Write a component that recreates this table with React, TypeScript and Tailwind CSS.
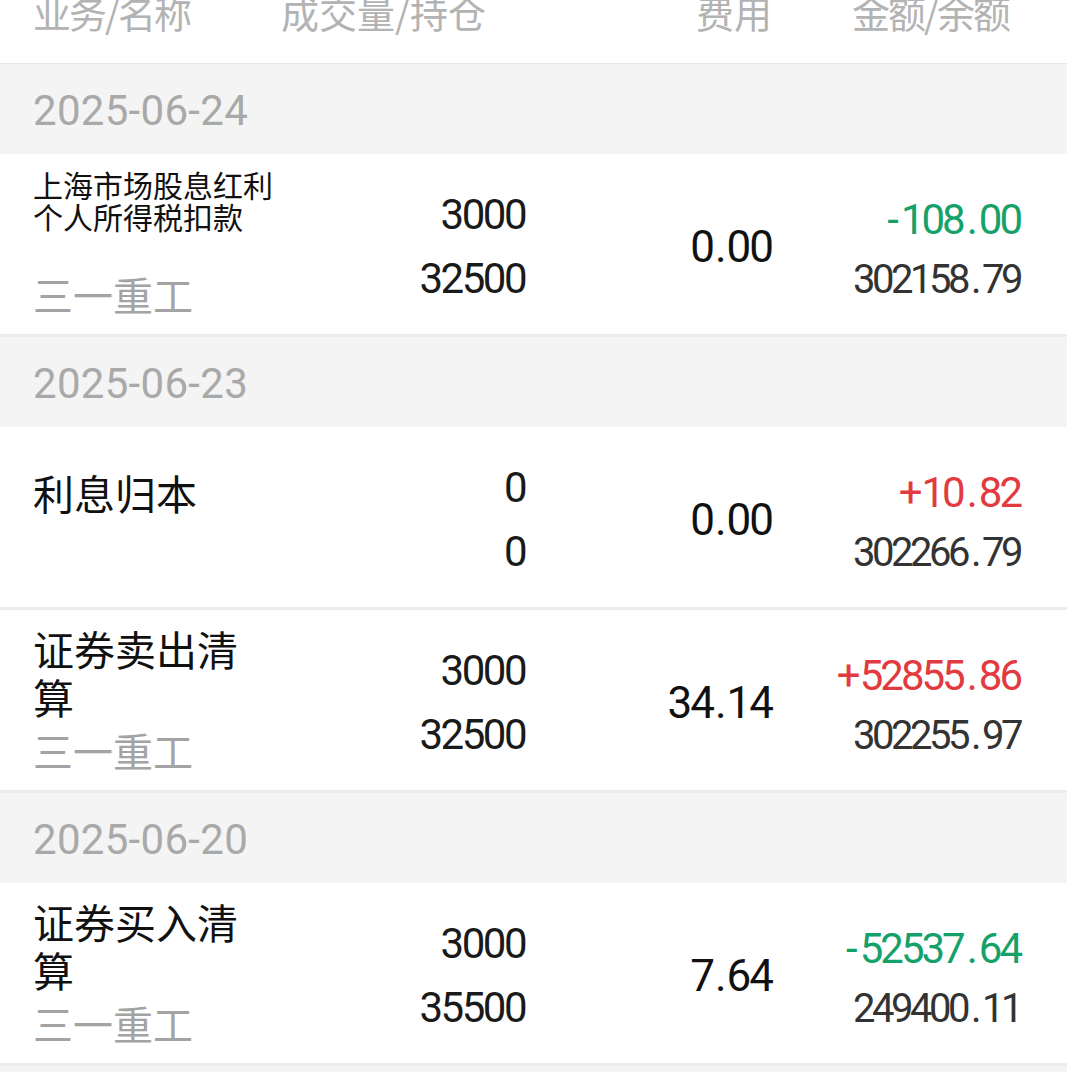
import React from "react";

type Rec = {
  name: string;
  small?: boolean;
  sub?: string;
  qty: string;
  hold: string;
  fee: string;
  amt: string;
  up: boolean;
  bal: string;
};

const groups: { date: string; items: Rec[] }[] = [
  {
    date: "2025-06-24",
    items: [
      {
        name: "上海市场股息红利个人所得税扣款",
        small: true,
        sub: "三一重工",
        qty: "3000",
        hold: "32500",
        fee: "0.00",
        amt: "-108.00",
        up: false,
        bal: "302158.79",
      },
    ],
  },
  {
    date: "2025-06-23",
    items: [
      { name: "利息归本", qty: "0", hold: "0", fee: "0.00", amt: "+10.82", up: true, bal: "302266.79" },
      {
        name: "证券卖出清算",
        sub: "三一重工",
        qty: "3000",
        hold: "32500",
        fee: "34.14",
        amt: "+52855.86",
        up: true,
        bal: "302255.97",
      },
    ],
  },
  {
    date: "2025-06-20",
    items: [
      {
        name: "证券买入清算",
        sub: "三一重工",
        qty: "3000",
        hold: "35500",
        fee: "7.64",
        amt: "-52537.64",
        up: false,
        bal: "249400.11",
      },
    ],
  },
  { date: "2025-06-19", items: [] },
];

const NUM = "font-['Roboto',sans-serif]";
const CJK = "font-['Noto_Sans_CJK_SC','Noto_Sans',sans-serif]";

function Num({ v, dotCls, minusCls, plusCls }: { v: string; dotCls: string; minusCls?: string; plusCls?: string }) {
  let sign = "";
  let rest = v;
  if (v[0] === "+" || v[0] === "-") {
    sign = v[0];
    rest = v.slice(1);
  }
  const [int, frac] = rest.split(".");
  return (
    <>
      {sign === "-" && <span className={minusCls}>-</span>}
      {sign === "+" && <span className={plusCls}>+</span>}
      {int}
      {frac !== undefined && (
        <>
          <span className={dotCls}>.</span>
          {frac}
        </>
      )}
    </>
  );
}

function Row({ r }: { r: Rec }) {
  return (
    <div className="flex h-[183px] items-center border-b-[3px] border-[#ececec] bg-white pl-[33px] pr-[47px] pt-[6px]">
      <div className={`mb-[8px] flex w-[245px] shrink-0 flex-col ${CJK}`}>
        <div className="min-h-[96px]">
          {r.small ? (
            <div className="text-[30px] leading-[32px] text-[#111]">{r.name}</div>
          ) : (
            <div className="text-[41px] leading-[48px] text-[#111]">{r.name}</div>
          )}
        </div>
        {r.sub && <div className="mt-[6px] text-[40px] leading-[48px] text-[#a3a3a3]">{r.sub}</div>}
      </div>
      <div
        className={`w-[247px] shrink-0 text-right text-[42px] leading-[64px] tracking-[-2.5px] text-[#1a1a1a] ${NUM}`}
      >
        <div>{r.qty}</div>
        <div>{r.hold}</div>
      </div>
      <div className={`w-[247px] shrink-0 text-right text-[44px] leading-[64px] tracking-[-2px] text-[#111] ${NUM}`}>
        <Num v={r.fee} dotCls="mx-[2px]" />
      </div>
      <div className={`mt-[5px] w-[248px] shrink-0 text-right leading-[60px] ${NUM}`}>
        <div className={`text-[42px] tracking-[-3px] ${r.up ? "text-[#e23b3f]" : "text-[#16a16a]"}`}>
          <Num v={r.amt} dotCls="mx-[4px]" minusCls="mr-[5px]" plusCls="mr-[2px]" />
        </div>
        <div className="text-[40px] tracking-[-3.5px] text-[#333333]">
          <Num v={r.bal} dotCls="mx-[4px]" />
        </div>
      </div>
    </div>
  );
}

export default function App() {
  return (
    <div className="w-[1067px] bg-white">
      <div
        className={`flex h-[64px] items-start overflow-hidden border-b border-[#e6e6e6] pl-[33px] pr-[47px] text-[38px] leading-[38px] text-[#b3b3b3] ${CJK}`}
      >
        <div className="-mt-[7px] w-[245px] shrink-0 tracking-[-2px]">业务/名称</div>
        <div className="-mt-[7px] w-[247px] shrink-0 pl-[3px]">成交量/持仓</div>
        <div className="-mt-[7px] w-[247px] shrink-0 text-right">费用</div>
        <div className="-mt-[7px] w-[248px] shrink-0 pr-[11px] text-right tracking-[-2px]">金额/余额</div>
      </div>
      {groups.map((g) => (
        <div key={g.date}>
          <div className="flex h-[90px] items-center bg-[#f4f4f4] pl-[33px] pt-[3px] font-['Roboto',sans-serif] text-[42px] tracking-[0.3px] text-[#a9a9a9]">
            {g.date}
          </div>
          {g.items.map((r, i) => (
            <Row key={i} r={r} />
          ))}
        </div>
      ))}
    </div>
  );
}
